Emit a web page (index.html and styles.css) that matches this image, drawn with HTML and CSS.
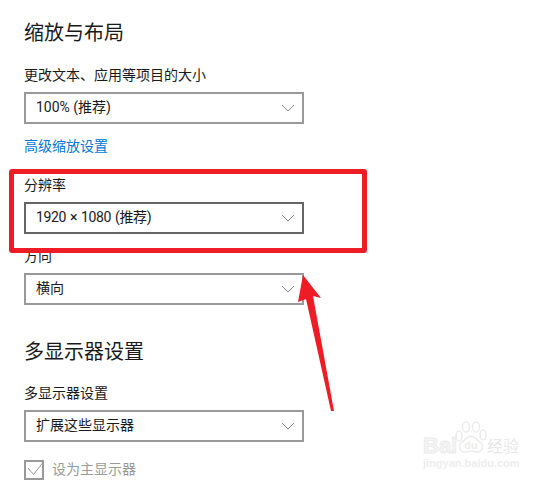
FILE: index.html
```html
<!DOCTYPE html>
<html lang="zh">
<head>
    <meta charset="UTF-8">
    <title>缩放与布局</title>
    <link rel="stylesheet" href="styles.css">
</head>
<body>

<div class="settings">
    <h2 class="title">缩放与布局</h2>
    <p class="label label-first">更改文本、应用等项目的大小</p>
    <div class="select">
        <span>100% (推荐)</span>
        <svg class="chevron" viewBox="0 0 14 8"><path d="M1 1l6 6 6-6"/></svg>
    </div>
    <a class="link" href="#">高级缩放设置</a>

    <p class="label label-res">分辨率</p>
    <div class="select select-dark">
        <span class="tight">1920 × 1080 (推荐)</span>
        <svg class="chevron" viewBox="0 0 14 8"><path d="M1 1l6 6 6-6"/></svg>
    </div>

    <p class="label label-dir">方向</p>
    <div class="select">
        <span>横向</span>
        <svg class="chevron" viewBox="0 0 14 8"><path d="M1 1l6 6 6-6"/></svg>
    </div>

    <h2 class="title title-multi">多显示器设置</h2>
    <p class="label label-multi">多显示器设置</p>
    <div class="select">
        <span>扩展这些显示器</span>
        <svg class="chevron" viewBox="0 0 14 8"><path d="M1 1l6 6 6-6"/></svg>
    </div>

    <div class="check">
        <svg class="checkbox" viewBox="0 0 20 20">
            <rect x="1" y="1" width="18" height="18"/>
            <path d="M4 8l5.500 6.500L18.500 3"/>
        </svg>
        <span>设为主显示器</span>
    </div>
</div>

<!-- 红框和箭头标注 -->
<div class="red-box"></div>
<svg class="arrow" viewBox="0 0 551 481">
    <path d="M303 275L321 298 313 296 334 411 331 411 306 299 298 302Z"/>
</svg>

<!-- 水印 -->
<div class="watermark">
    <div class="wm-top">
        <span class="wm-bai">Bai</span>
        <svg class="wm-paw" viewBox="0 0 32 36">
            <ellipse cx="4" cy="15" rx="3" ry="5"/>
            <ellipse cx="11" cy="6" rx="3.500" ry="5"/>
            <ellipse cx="21" cy="6" rx="3.500" ry="5"/>
            <ellipse cx="28" cy="14" rx="3" ry="5"/>
            <path d="M16 15c-4 0-5 4-9 6-4 3-3 10 3 10 2 0 4-1 6-1s4 1 6 1c6 0 7-7 3-10-4-2-5-6-9-6z"/>
            <text class="wm-du" x="16" y="28" text-anchor="middle">du</text>
        </svg>
        <span class="wm-cn">经验</span>
    </div>
    <div class="wm-url">jingyan.baidu.com</div>
</div>

</body>
</html>
```

FILE: styles.css
```css
* { box-sizing: border-box; margin: 0; padding: 0; }
body {
    font-family: Roboto, "Noto Sans CJK SC", sans-serif;
    background: #fff;
    color: #1a1a1a;
    width: 551px;
    height: 481px;
    position: relative;
    overflow: hidden;
}

.settings {
    padding: 19px 0 0 24px;
}
.title {
    font-size: 20px;
    font-weight: 400;
    line-height: 28px;
}
.title-multi {
    margin-top: 33px;
}
.label {
    font-size: 14px;
    line-height: 20px;
}
.label-first { margin-top: 18px; }
.label-res { margin-top: 19px; }
.label-dir { margin-top: 12px; }
.label-multi { margin-top: 17px; }

/* 下拉框 */
.select {
    width: 280px;
    height: 32px;
    margin-top: 7px;
    border: 2px solid #999;
    padding: 0 10px;
    display: flex;
    align-items: center;
    justify-content: space-between;
    font-size: 14px;
    line-height: 26px;
}
.select-dark {
    border-color: #666;
}
.select span {
    margin-top: -2px;
}
.tight {
    letter-spacing: -0.4px;
    word-spacing: 1px;
}
.chevron {
    width: 14px;
    height: 8px;
    margin-right: -3px;
    fill: none;
    stroke: #8a8a8a;
    stroke-width: 1;
}

.link {
    display: block;
    margin-top: 12px;
    font-size: 14px;
    line-height: 20px;
    color: #0078d7;
    text-decoration: none;
}

/* 复选框 */
.check {
    display: flex;
    align-items: center;
    gap: 8px;
    margin-top: 18px;
    font-size: 14px;
    color: #999;
}
.check span {
    margin-top: -5px;
}
.checkbox {
    width: 20px;
    height: 20px;
    fill: none;
    stroke: #999;
    stroke-width: 2;
}
.checkbox path { stroke-width: 1; }

/* 标注 */
.red-box {
    position: absolute;
    left: 9px;
    top: 169px;
    width: 358px;
    height: 84px;
    border: 5px solid #ee1c25;
    border-radius: 3px;
}
.arrow {
    position: absolute;
    left: 0;
    top: 0;
    width: 551px;
    height: 481px;
    fill: #ee1c25;
}

/* 水印 */
.watermark {
    position: absolute;
    left: 423px;
    top: 421px;
    width: 100px;
    color: #f5f5f5;
}
.wm-top {
    display: flex;
    align-items: flex-end;
    height: 36px;
}
.wm-bai {
    font-family: "Liberation Sans", sans-serif;
    font-size: 22px;
    font-weight: 700;
    line-height: 22px;
    width: 32px;
    -webkit-text-stroke: 1px #ececec;
}
.wm-paw {
    width: 32px;
    height: 36px;
    fill: #fff;
    stroke: #ececec;
    stroke-width: 1.500;
}
.wm-du {
    font-family: "Liberation Sans", sans-serif;
    font-size: 11px;
    font-weight: 700;
    fill: #ececec;
    stroke: none;
}
.wm-cn {
    font-size: 16px;
    line-height: 20px;
    color: #e8e8e8;
}
.wm-url {
    font-family: "Liberation Sans", sans-serif;
    font-size: 11px;
    font-weight: 700;
    line-height: 12px;
    color: #eeeeee;
    white-space: nowrap;
}
```
